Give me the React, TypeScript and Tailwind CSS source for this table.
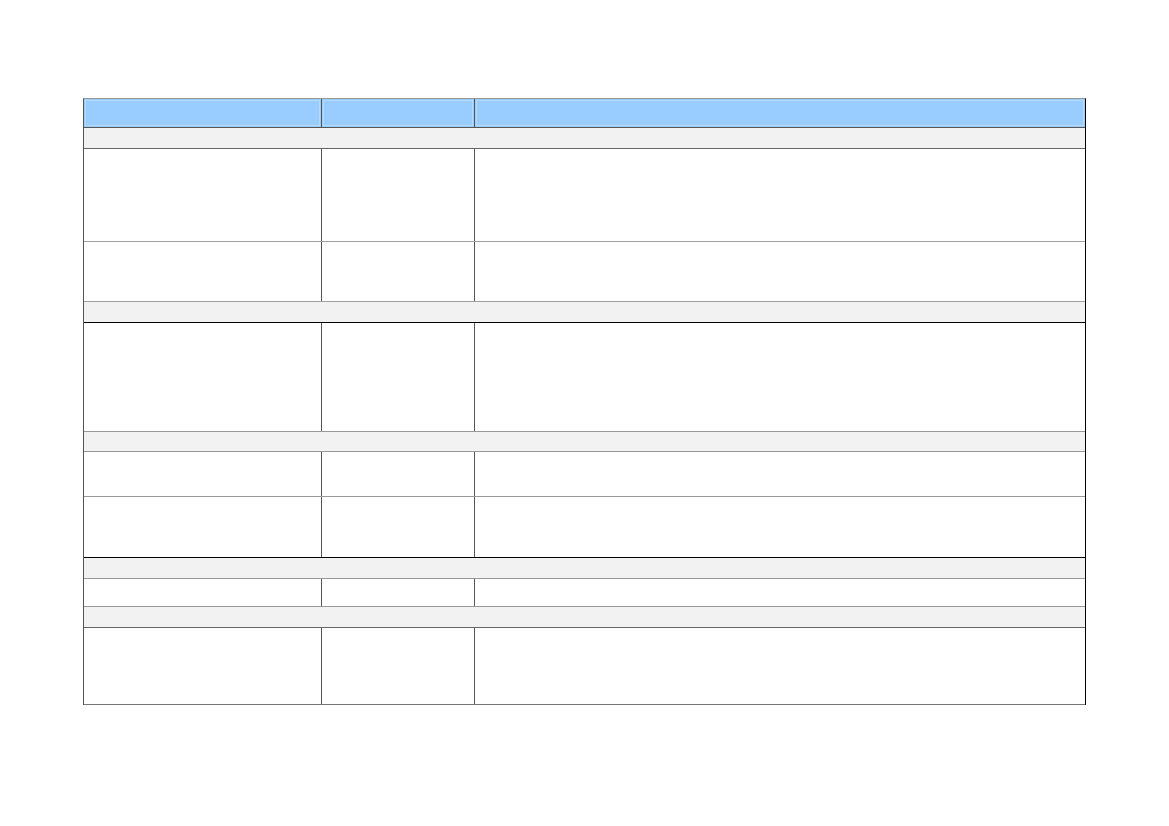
const cols = ['w-[238px]', 'w-[153px]', 'flex-1'];

type Row = { kind: 'head' | 'group' | 'data'; h: string; line: string };

const rows: Row[] = [
  { kind: 'head', h: 'h-[29px]', line: 'border-b-[#555555]' },
  { kind: 'group', h: 'h-[21px]', line: 'border-b-[#666666]' },
  { kind: 'data', h: 'h-[93px]', line: 'border-b-[#a0a0a0]' },
  { kind: 'data', h: 'h-[60px]', line: 'border-b-[#a0a0a0]' },
  { kind: 'group', h: 'h-[21px]', line: 'border-b-black' },
  { kind: 'data', h: 'h-[109px]', line: 'border-b-[#999999]' },
  { kind: 'group', h: 'h-[20px]', line: 'border-b-[#999999]' },
  { kind: 'data', h: 'h-[45px]', line: 'border-b-[#999999]' },
  { kind: 'data', h: 'h-[61px]', line: 'border-b-black' },
  { kind: 'group', h: 'h-[21px]', line: 'border-b-[#999999]' },
  { kind: 'data', h: 'h-[28px]', line: 'border-b-[#999999]' },
  { kind: 'group', h: 'h-[21px]', line: 'border-b-[#666666]' },
  { kind: 'data', h: 'h-[77px]', line: 'border-b-[#777777]' },
];

function TableRow({ row }: { row: Row }) {
  if (row.kind === 'group') {
    return <div className={`${row.h} border-b ${row.line} bg-[#f2f2f2]`} />;
  }
  const head = row.kind === 'head';
  return (
    <div className={`flex ${row.h} border-b ${row.line} ${head ? 'bg-[#99ccff]' : 'bg-white'}`}>
      {cols.map((w, i) => (
        <div
          key={i}
          className={`${w} h-full ${i < 2 ? 'border-r border-r-[#555555]' : ''} ${head ? 'p-px' : ''}`}
        >
          {head && <div className="h-full w-full border border-[#b3d9ff]" />}
        </div>
      ))}
    </div>
  );
}

export default function App() {
  return (
    <div className="min-h-screen bg-white pl-[83px] pt-[98px] font-['Liberation_Sans',sans-serif]">
      <div className="w-[1003px] border-l border-t border-r border-l-[#555555] border-t-[#999999] border-r-black">
        {rows.map((r, i) => (
          <TableRow key={i} row={r} />
        ))}
      </div>
    </div>
  );
}
